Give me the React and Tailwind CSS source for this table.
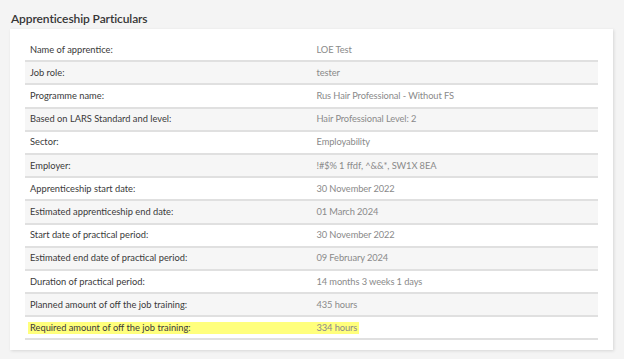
const ROWS = [
  ["Name of apprentice:", "LOE Test"],
  ["Job role:", "tester"],
  ["Programme name:", "Rus Hair Professional - Without FS"],
  ["Based on LARS Standard and level:", "Hair Professional Level: 2"],
  ["Sector:", "Employability"],
  ["Employer:", "!#$% 1 ffdf, ^&&*, SW1X 8EA"],
  ["Apprenticeship start date:", "30 November 2022"],
  ["Estimated apprenticeship end date:", "01 March 2024"],
  ["Start date of practical period:", "30 November 2022"],
  ["Estimated end date of practical period:", "09 February 2024"],
  ["Duration of practical period:", "14 months 3 weeks 1 days"],
  ["Planned amount of off the job training:", "435 hours"],
  ["Required amount of off the job training:", "334 hours", true],
];

// highlighted row gets a yellow marker band painted behind the text
const HIGHLIGHT =
  "bg-white bg-[linear-gradient(#ffff7c,#ffff7c)] bg-no-repeat bg-[length:331px_12px] bg-[position:3px_5px]";

export default function App() {
  return (
    <div className="w-[624px] h-[359px] bg-[#f4f4f4] overflow-hidden font-['Lato',sans-serif] pt-[10px]">
      <h2 className="pl-[11px] text-[12px] leading-[17px] font-semibold text-[#363636] tracking-[-0.1px]">Apprenticeship Particulars</h2>
      <div className="mx-[10px] mt-[2px] w-[603px] bg-white px-[15px] pt-[10px] pb-[10px] shadow-[1px_1px_3px_rgba(0,0,0,0.12)]">
        <div className="flex flex-col">
          {ROWS.map(([label, value, hl], i) => (
            <div
              key={label}
              className={`flex items-center h-[23.2px] border-b-2 border-[#e0e0e0] text-[9.3px] ${hl ? HIGHLIGHT : i % 2 ? "bg-[#f6f6f6]" : "bg-white"}`}
            >
              <div className="w-1/2 px-[5px] text-[#3a3a3a]">{label}</div>
              <div className="w-1/2 px-[5px] text-[#8a8a8a] tracking-[-0.1px]">{value}</div>
            </div>
          ))}
        </div>
      </div>
    </div>
  );
}
